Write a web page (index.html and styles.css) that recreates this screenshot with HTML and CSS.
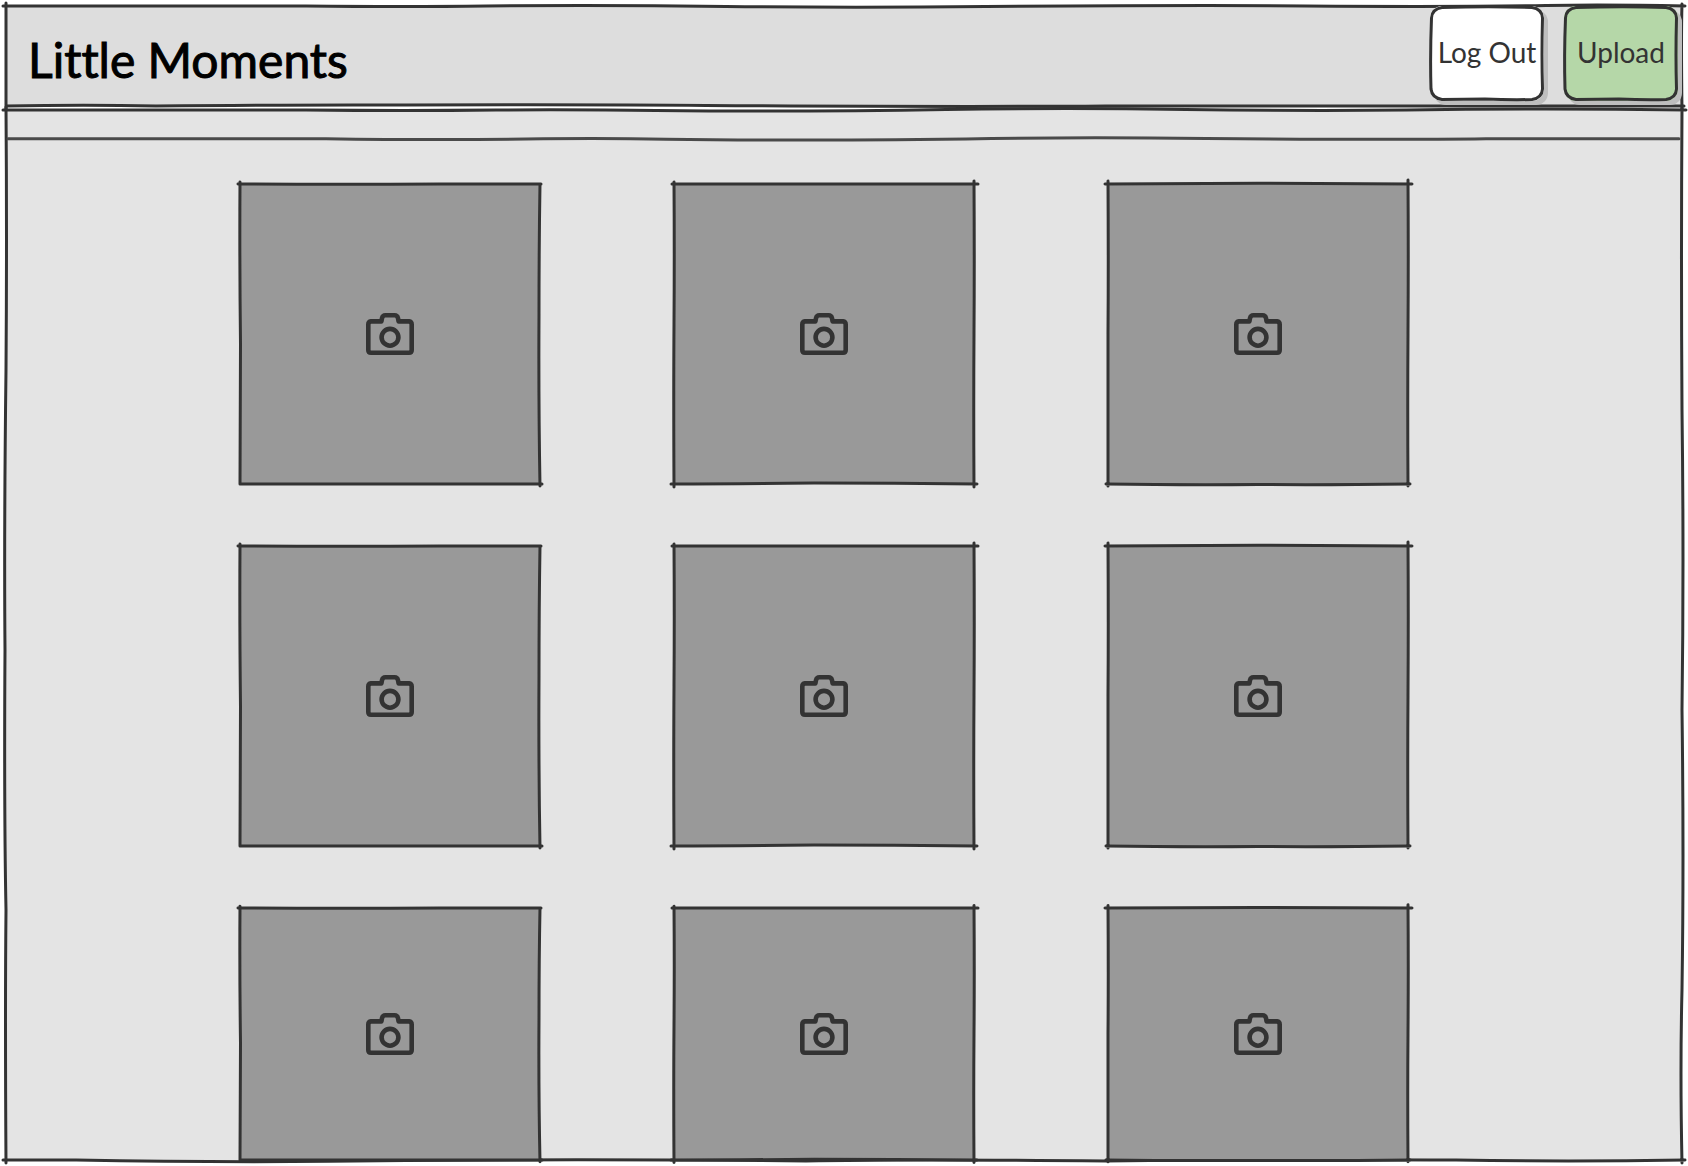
FILE: index.html
```html
<!DOCTYPE html>
<html lang="en">
<head>
    <meta charset="UTF-8">
    <meta name="viewport" content="width=device-width, initial-scale=1.0">
    <title>Little Moments</title>
    <link rel="stylesheet" href="styles.css">
</head>
<body>
<!-- shared shapes -->
<svg class="shapes" aria-hidden="true">
    <symbol id="camera" viewBox="0 0 48 42">
        <path d="M5 8.4H15.4L16 5.2Q16.7 2.3 19.4 2.3H28.6Q31.3 2.3 32 5.2L32.6 8.4H43Q45.7 8.8 45.7 11.5V37Q45.7 39.7 43 39.7H5Q2.3 39.7 2.3 37V11.5Q2.3 8.8 5 8.4Z"/>
        <circle cx="24" cy="24.3" r="8.4"/>
    </symbol>
    <!-- hand drawn tile outlines, one for each column -->
    <symbol id="outline-1" viewBox="0 0 300 300" preserveAspectRatio="none" overflow="visible">
        <path d="M-2 0Q100 .6 200 0H301M0 -2Q-.5 75 .5 160Q.5 230 0 300M300 0Q299 60 299 130Q298.5 220 300 302M0 300H302"/>
    </symbol>
    <symbol id="outline-2" viewBox="0 0 300 300" preserveAspectRatio="none" overflow="visible">
        <path d="M-2 0H304M0 -2Q.5 70 0 140Q-.5 210 0 303M300 -3Q300.5 80 300 150Q299.5 220 300 303M-3 300Q60 300 140 299Q220 299 303 300"/>
    </symbol>
    <symbol id="outline-3" viewBox="0 0 300 300" preserveAspectRatio="none" overflow="visible">
        <path d="M-3 0Q70 0 150 -.7Q220 -.5 304 0M0 -3Q.5 80 0 150V302M300 -4Q300.5 70 300 150Q299.5 220 300 302M-2 300Q70 301 150 300.5Q220 301 302 300"/>
    </symbol>
    <symbol id="button-outline" viewBox="0 0 114 95" preserveAspectRatio="none" overflow="visible">
        <path d="M12 1.5Q60 0 102 1.5Q112 3 112.5 12Q111.5 50 112.5 83Q112 92 102 93.5Q80 94 55 93Q35 93 12 93.5Q2 92 1 83Q0 50 1.5 12Q2 3 12 1.5Z"/>
    </symbol>
</svg>

<header class="header">
    <svg class="sketch" viewBox="0 0 1676 100" preserveAspectRatio="none" aria-hidden="true">
        <path d="M-3 0H300Q400 1 480 0Q600 -1 720 .5Q850 2 980 .5Q1200 -1 1300 0Q1450 1 1540 -.5Q1600 -1.5 1679 0M0 -3V104M1676 -2Q1675 30 1676 104M0 100Q80 98.5 150 100Q300 98.5 400 99Q600 98.5 700 99.5Q950 101 1100 100Q1300 99 1678 100"/>
    </svg>
    <h1 class="title">Little Moments</h1>
    <div class="actions">
        <button class="button" type="button">
            <svg class="sketch" aria-hidden="true"><use href="#button-outline"/></svg>
            <span class="button-text">Log Out</span>
        </button>
        <button class="button button-upload" type="button">
            <svg class="sketch" aria-hidden="true"><use href="#button-outline"/></svg>
            <span class="button-text">Upload</span>
        </button>
    </div>
</header>

<main class="content">
    <svg class="sketch" viewBox="0 0 1676 1050" preserveAspectRatio="none" aria-hidden="true">
        <path d="M-3 0H300Q400 1 490 0Q580 -.5 650 .6Q800 2 940 -.5Q1060 -2.5 1180 -.5Q1300 1 1400 0Q1540 -2 1680 0M0 -3Q1 130 0 260Q-2 420 -1 540Q-2 700 0 800Q-1 900 0 1053M1676 -2Q1675 150 1676 300Q1678 450 1676 600Q1678 750 1676 880Q1674 960 1676 1053M-3 1050H70Q230 1053 400 1050.5Q600 1049 800 1051Q900 1049 1100 1051Q1300 1049 1450 1050Q1560 1052 1679 1050"/>
    </svg>
    <div class="strip">
        <svg class="sketch" viewBox="0 0 1676 29" preserveAspectRatio="none" aria-hidden="true">
            <path d="M2 28.7H320Q430 30.3 520 29Q600 28 660 29.3Q780 31 960 29Q1070 26.7 1200 28.5Q1380 30 1480 28.8H1673"/>
        </svg>
    </div>
    <ul class="gallery">
        <li class="photo">
            <svg class="sketch" aria-hidden="true"><use href="#outline-1"/></svg>
            <svg class="camera" role="img" aria-label="Photo"><use href="#camera"/></svg>
        </li>
        <li class="photo">
            <svg class="sketch" aria-hidden="true"><use href="#outline-2"/></svg>
            <svg class="camera" role="img" aria-label="Photo"><use href="#camera"/></svg>
        </li>
        <li class="photo">
            <svg class="sketch" aria-hidden="true"><use href="#outline-3"/></svg>
            <svg class="camera" role="img" aria-label="Photo"><use href="#camera"/></svg>
        </li>
        <li class="photo">
            <svg class="sketch" aria-hidden="true"><use href="#outline-1"/></svg>
            <svg class="camera" role="img" aria-label="Photo"><use href="#camera"/></svg>
        </li>
        <li class="photo">
            <svg class="sketch" aria-hidden="true"><use href="#outline-2"/></svg>
            <svg class="camera" role="img" aria-label="Photo"><use href="#camera"/></svg>
        </li>
        <li class="photo">
            <svg class="sketch" aria-hidden="true"><use href="#outline-3"/></svg>
            <svg class="camera" role="img" aria-label="Photo"><use href="#camera"/></svg>
        </li>
        <li class="photo">
            <svg class="sketch" aria-hidden="true"><use href="#outline-1"/></svg>
            <svg class="camera" role="img" aria-label="Photo"><use href="#camera"/></svg>
        </li>
        <li class="photo">
            <svg class="sketch" aria-hidden="true"><use href="#outline-2"/></svg>
            <svg class="camera" role="img" aria-label="Photo"><use href="#camera"/></svg>
        </li>
        <li class="photo">
            <svg class="sketch" aria-hidden="true"><use href="#outline-3"/></svg>
            <svg class="camera" role="img" aria-label="Photo"><use href="#camera"/></svg>
        </li>
    </ul>
</main>
</body>
</html>
```
FILE: styles.css
```css
* {
    margin: 0;
    padding: 0;
    box-sizing: border-box;
}

body {
    display: flex;
    flex-direction: column;
    gap: 4px;
    padding: 6px;
    min-height: 100vh;
    background: #fff;
    color: #333;
    font-family: Lato, "Open Sans", sans-serif;
    font-variant-ligatures: none;
}

.shapes {
    position: absolute;
    width: 0;
    height: 0;
}

/* pencil lines drawn over the edges of a box */
.sketch {
    position: absolute;
    top: 0;
    left: 0;
    width: 100%;
    height: 100%;
    overflow: visible;
    pointer-events: none;
    fill: none;
    stroke: #333;
    stroke-width: 3px;
    stroke-linecap: round;
    stroke-linejoin: round;
}

.header {
    position: relative;
    display: flex;
    justify-content: space-between;
    align-items: flex-start;
    min-height: 100px;
    padding: 0 4px 4px 22px;
    background: #ddd;
}

.title {
    padding-top: 24px;
    color: #000;
    font-size: 48px;
    line-height: 60px;
    font-weight: 400;
    -webkit-text-stroke: 1px #000;
}

.actions {
    display: flex;
    gap: 20px;
}

.button {
    position: relative;
    width: 114px;
    height: 95px;
    padding-bottom: 4px;
    border: none;
    border-radius: 12px;
    background: #fff;
    box-shadow: 4px 4px 0 #bebebe;
    color: #333;
    font-family: inherit;
    font-size: 28px;
    line-height: 32px;
    cursor: pointer;
}

.button-upload {
    background: #b5d7a8;
}

.button-text {
    position: relative;
    white-space: nowrap;
}

.content {
    position: relative;
    display: flex;
    flex-direction: column;
    flex: 1;
    background: #e4e4e4;
}

.strip {
    position: relative;
    height: 29px;
}

.strip .sketch {
    stroke: #4a4a4a;
}

/* the last row takes what is left of the window */
.gallery {
    display: grid;
    flex: 1;
    grid-template-columns: repeat(3, 300px);
    grid-template-rows: 300px 300px minmax(252px, 1fr);
    justify-content: center;
    gap: 62px 134px;
    padding: 45px 40px 0 0;
    list-style: none;
}

.photo {
    position: relative;
    display: flex;
    justify-content: center;
    align-items: center;
    background: #999;
}

.camera {
    width: 48px;
    height: 42px;
    fill: none;
    stroke: #333;
    stroke-width: 4.6;
    stroke-linejoin: round;
}

.sketch path,
[id^="outline"] path,
#button-outline path {
    vector-effect: non-scaling-stroke;
}
```
